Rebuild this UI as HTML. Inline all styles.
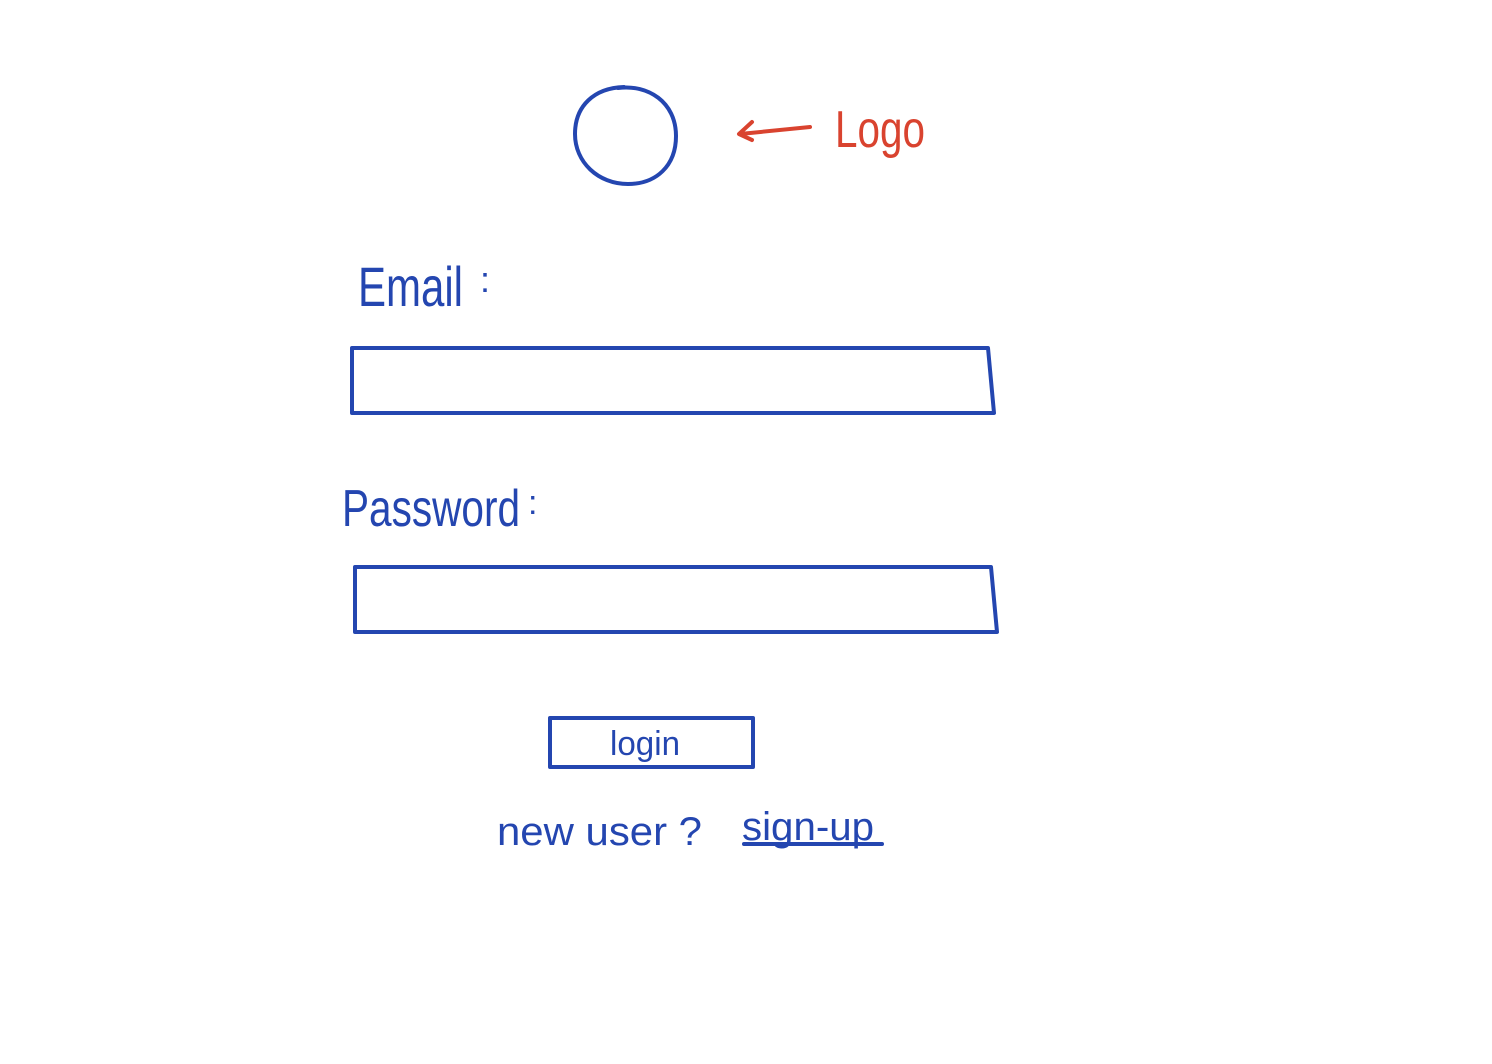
<!DOCTYPE html>
<html><head><meta charset="utf-8"><style>
html,body{margin:0;padding:0;background:#fff;width:1492px;height:1064px;overflow:hidden}
svg{display:block}
text{font-family:"Liberation Sans",sans-serif;fill:#2446b0}
</style></head><body>
<svg width="1492" height="1064" viewBox="0 0 1492 1064" xmlns="http://www.w3.org/2000/svg">
<g fill="none" stroke="#2446b0" stroke-width="4" stroke-linejoin="round" stroke-linecap="round">
<path d="M618 88 C648 84 676 102 676 136 C676 166 656 184 628 184 C598 184 575 162 575 134 C575 106 594 88 624 87"/>
<path d="M352 348 L988 348 L994 413 L352 413 Z"/>
<path d="M355 567 L991 567 L997 632 L355 632 Z"/>
<path d="M550 718 L753 718 L753 767 L550 767 Z"/>
<path d="M744 844 L882 844"/>
</g>
<g fill="none" stroke="#d9432f" stroke-width="4" stroke-linecap="round" stroke-linejoin="round">
<path d="M810 127 L740 134"/>
<path d="M752 122 L739 134 L752 140"/>
</g>
<text x="835" y="147" font-size="52" style="fill:#d9432f" textLength="90" lengthAdjust="spacingAndGlyphs">Logo</text>
<text x="358" y="306" font-size="56" textLength="105" lengthAdjust="spacingAndGlyphs">Email</text>
<text x="480" y="292" font-size="36">:</text>
<text x="342" y="526" font-size="52" textLength="178" lengthAdjust="spacingAndGlyphs">Password</text>
<text x="528" y="514" font-size="34">:</text>
<text x="610" y="755" font-size="34" textLength="70" lengthAdjust="spacingAndGlyphs">login</text>
<text x="497" y="845" font-size="40" textLength="205" lengthAdjust="spacingAndGlyphs">new user ?</text>
<text x="742" y="840" font-size="40" textLength="132" lengthAdjust="spacingAndGlyphs">sign-up</text>
</svg>
</body></html>
